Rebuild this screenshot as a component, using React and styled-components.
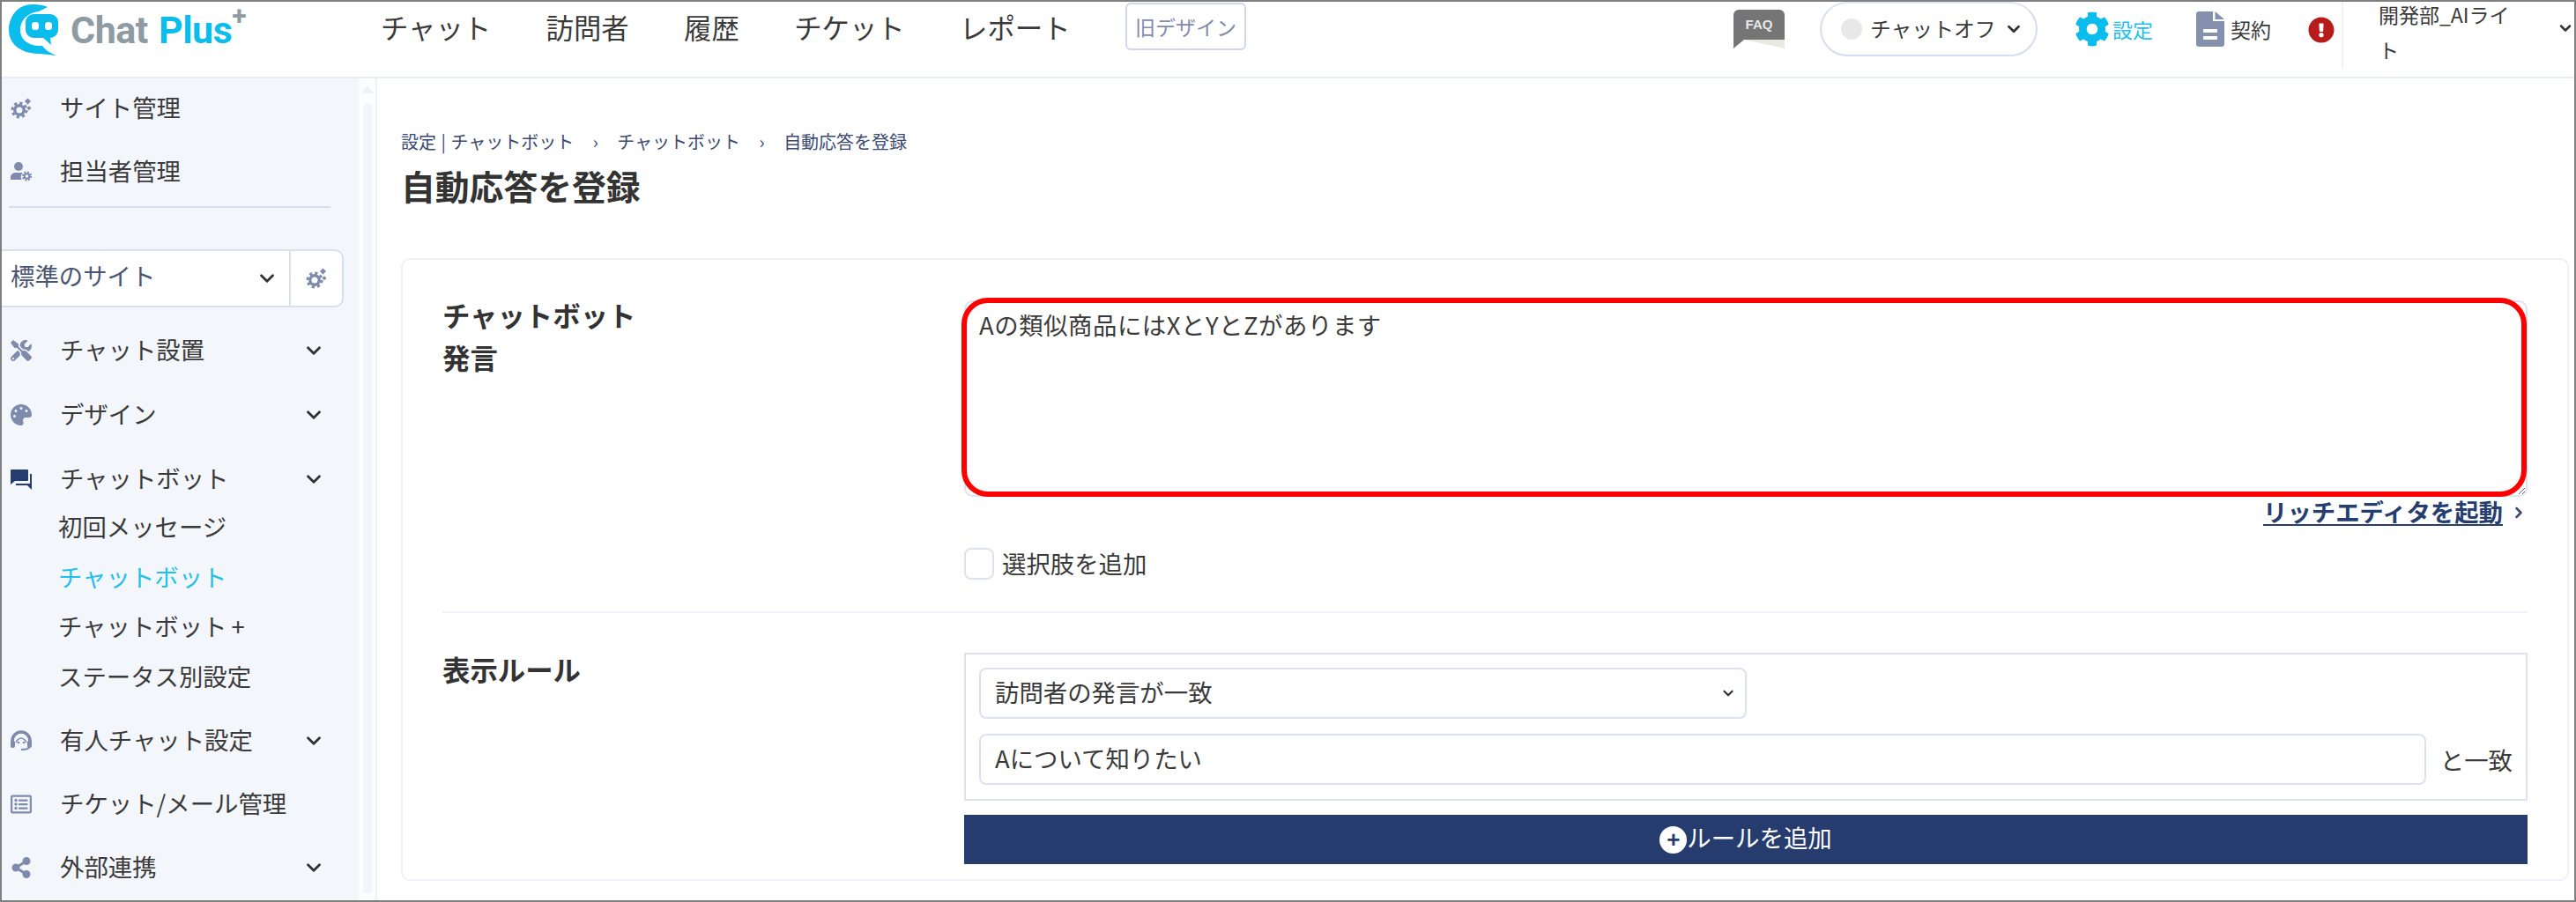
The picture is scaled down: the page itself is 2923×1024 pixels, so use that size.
import styled, { createGlobalStyle } from "styled-components";
import { ChevronDown, ChevronRight } from "lucide-react";
import { FaCog, FaTools, FaPalette, FaRegListAlt, FaShareAlt, FaExclamationCircle } from "react-icons/fa";

const Global = createGlobalStyle`
  html, body { margin: 0; padding: 0; background: #fff; }
  body {
    font-family: "Noto Sans CJK JP", "Noto Sans", sans-serif;
    color: #3a3a3a;
  }
  * { box-sizing: border-box; }
`;

const Frame = styled.div`
  width: 2923px;
  height: 1024px;
  border: 2px solid #808080;
  overflow: hidden;
  display: flex;
  flex-direction: column;
  background: #fff;
`;

/* ---- header ---- */
const Header = styled.header`
  height: 87px;
  flex: none;
  display: flex;
  align-items: flex-start;
  border-bottom: 2px solid #e9eef6;
`;

const Logo = styled.div`
  width: 430px;
  flex: none;
  display: flex;
  align-items: center;
  gap: 12px;
  padding: 1px 0 0 6px;
  height: 62px;
`;

const LogoText = styled.div`
  font-family: Roboto, sans-serif;
  font-weight: 700;
  font-size: 43px;
  line-height: 58px;
  letter-spacing: -0.5px;
  color: #8f9ba3;
  white-space: nowrap;
  b { font-weight: 700; color: #0bbdec; margin-left: 2px; }
  sup {
    font-size: 30px;
    line-height: 0;
    position: relative;
    top: -5px;
    vertical-align: super;
  }
`;

const TopNav = styled.nav`
  display: flex;
  align-items: center;
  gap: 62.3px;
  height: 56px;
  font-size: 31.4px;
  color: #3a3a3a;
`;

const OldDesign = styled.span`
  font-size: 23px;
  line-height: 50px;
  padding: 0 9px;
  border: 2px solid #cfd8ea;
  border-radius: 6px;
  color: #7f8bad;
`;

const HeaderRight = styled.div`
  margin-left: auto;
  display: flex;
  align-items: flex-start;
  font-size: 23px;
  height: 80px;
`;

const FaqMark = styled.svg`
  width: 58px;
  height: 46px;
  margin-top: 7px;
  text {
    font-family: "Liberation Sans", sans-serif;
    font-weight: 700;
    font-size: 15px;
    fill: #e8e8e8;
  }
`;

const ChatPill = styled.div`
  width: 247px;
  height: 62px;
  margin-left: 40px;
  border: 2px solid #d5def0;
  border-top-color: #dfe6f3;
  border-radius: 31px;
  display: flex;
  align-items: center;
  padding: 0 0 3px 22px;
  gap: 9px;
  font-size: 23.8px;
  white-space: nowrap;
  svg { margin-top: 3px; }
`;

const Dot = styled.span`
  width: 24px;
  height: 24px;
  border-radius: 50%;
  background: #e8e8e8;
  margin-top: 3px;
`;

const Tool = styled.div`
  display: flex;
  align-items: center;
  height: 62px;
  margin-left: ${(p) => p.$ml}px;
  gap: ${(p) => p.$gap}px;
  color: ${(p) => p.$color || "#3a3a3a"};
  white-space: nowrap;
`;

const AlertWrap = styled.div`
  margin: 17px 8px 0 42px;
  color: #b71c1c;
  height: 30px;
  svg { display: block; }
`;

const Account = styled.div`
  position: relative;
  width: 264px;
  height: 76px;
  border-left: 2px solid #eef1f8;
  padding: 0 0 0 40px;
  line-height: 40px;
  span { display: block; width: 160px; margin-top: -6px; word-break: break-all; }
  svg { position: absolute; right: 0; top: 20px; }
`;

/* ---- sidebar ---- */
const Body = styled.div`
  flex: 1;
  display: flex;
  min-height: 0;
`;

const Sidebar = styled.aside`
  width: 405px;
  flex: none;
  background: #f3f6fb;
  font-size: 27.4px;
  color: #3a3a3a;
`;

const SideItem = styled.div`
  height: ${(p) => p.$h || 72}px;
  display: flex;
  align-items: center;
  gap: 32px;
  padding: 0 38px 4px 10px;
  white-space: nowrap;
  & > svg { margin-top: 4px; }
  & > svg:first-child {
    width: 24px;
    height: 24px;
    flex: none;
    color: ${(p) => (p.$active ? "#273c6e" : "#7f8bad")};
  }
  & > svg:last-child:not(:first-child) { margin-left: auto; }
`;

const SideTop = styled.div`
  display: flex;
  flex-direction: column;
  gap: 4px;
`;

const SideRule = styled.hr`
  margin: 5px 32px 0 8px;
  border: 0;
  border-top: 2px solid #d6dfef;
`;

const SiteSelect = styled.div`
  margin: 47px 17px 12px 0;
  height: 66px;
  background: #fff;
  border: 2px solid #d8e0f0;
  border-left: 0;
  border-radius: 0 10px 10px 0;
  display: flex;
  color: #4a5572;
`;

const SiteName = styled.div`
  flex: 1;
  display: flex;
  align-items: center;
  justify-content: space-between;
  padding: 0 12px 8px 10px;
  border-right: 2px solid #d8e0f0;
  svg { color: #333; margin-top: 8px; }
`;

const SiteGear = styled.div`
  width: 58px;
  display: flex;
  align-items: center;
  justify-content: center;
  color: #7f8bad;
`;

const SubList = styled.div`
  margin: -9px 0 7px;
`;

const SubItem = styled.div`
  height: 56.7px;
  line-height: 53.5px;
  padding-left: 64px;
  color: ${(p) => (p.$current ? "#1fc0ec" : "#3a3a3a")};
`;

const PlusGap = styled.span`
  margin-left: 5px;
`;

const Rail = styled.div`
  width: 21px;
  flex: none;
  border-right: 2px solid #eef1f8;
  background: #fcfdfe;
  display: flex;
  flex-direction: column;
  align-items: center;
  padding: 8px 0 7px 0;
`;

const RailArrow = styled.div`
  width: 0;
  height: 0;
  border-left: 7px solid transparent;
  border-right: 7px solid transparent;
  border-bottom: 9px solid #eef1f7;
  margin-bottom: 11px;
`;

const RailThumb = styled.div`
  flex: 1;
  width: 10px;
  background: #f2f5fa;
  border-radius: 5px;
`;

/* ---- main ---- */
const Main = styled.main`
  flex: 1;
  padding: 56px 6px 0 27px;
  min-width: 0;
`;

const Crumbs = styled.div`
  display: flex;
  align-items: center;
  gap: 21.5px;
  height: 30px;
  font-size: 20px;
  color: #3c4a72;
`;

const CrumbBar = styled.span`
  margin: 0 5.5px;
`;

const Title = styled.h1`
  margin: 10px 0 0;
  font-size: 38.8px;
  line-height: 50px;
  font-weight: 700;
  color: #333;
`;

const Card = styled.section`
  margin-top: 58px;
  height: 707px;
  border: 2px solid #eef1f8;
  border-radius: 10px;
  padding: 46px 45px 0;
`;

const Row = styled.div`
  display: grid;
  grid-template-columns: 592px 1fr;
`;

const Label = styled.div`
  font-size: 31.4px;
  font-weight: 700;
  line-height: 48px;
  margin-top: ${(p) => p.$top}px;
  color: #333;
`;

const EditorWrap = styled.div`
  position: relative;
  height: 223px;
`;

const Editor = styled.textarea`
  display: block;
  width: 100%;
  height: 100%;
  border: 2px solid #dbe3f2;
  border-radius: 10px;
  padding: 5px 15px;
  font: inherit;
  font-size: 27.4px;
  letter-spacing: 0.55px;
  line-height: 40px;
  color: #3a3a3a;
  outline: none;
`;

const Callout = styled.div`
  position: absolute;
  top: -3px;
  left: -3px;
  right: 1px;
  bottom: 0;
  border: 6px solid #ff0000;
  border-radius: 30px;
  pointer-events: none;
`;

const RichLink = styled.div`
  height: 36px;
  display: flex;
  align-items: center;
  justify-content: flex-end;
  gap: 8px;
  padding-bottom: 4px;
  font-size: 27.4px;
  font-weight: 700;
  color: #263d6f;
  u { text-underline-offset: 3px; }
  svg { color: #3c4a72; margin-top: 4px; }
`;

const CheckRow = styled.label`
  display: flex;
  align-items: center;
  gap: 9px;
  margin-top: 22px;
  height: 36px;
  padding-bottom: 2px;
  font-size: 27.4px;
  span { margin-top: 2px; }
`;

const CheckBox = styled.span`
  width: 34px;
  height: 36px;
  flex: none;
  border: 2px solid #dbe3f2;
  border-radius: 8px;
  background: #fff;
`;

const Divider = styled.hr`
  margin: 36px 0 45px;
  border: 0;
  border-top: 2px solid #eef1f8;
`;

const RuleBox = styled.div`
  height: 168px;
  border: 2px solid #dbe3f2;
  padding: 15px;
  display: flex;
  flex-direction: column;
  gap: 17px;
  font-size: 27.4px;
`;

const Field = styled.div`
  height: 58px;
  width: ${(p) => p.$w || "auto"};
  flex: ${(p) => (p.$grow ? 1 : "none")};
  border: 2px solid #dbe3f2;
  border-radius: 8px;
  display: flex;
  align-items: center;
  justify-content: space-between;
  padding: 0 10px 4px 16px;
  background: #fff;
  svg { margin-top: 4px; }
`;

const FieldLine = styled.div`
  display: flex;
  align-items: center;
  gap: 16px;
  white-space: nowrap;
`;

const AddRule = styled.button`
  display: flex;
  align-items: center;
  justify-content: center;
  width: 100%;
  height: 56px;
  margin-top: 16px;
  padding: 0 0 6px;
  background: #273c6e;
  border: 0;
  color: #fff;
  font: inherit;
  font-size: 27.4px;
`;

const PlusDisc = styled.span`
  width: 31px;
  height: 31px;
  margin-top: 6px;
  border-radius: 50%;
  background: #fff;
  color: #273c6e;
  font-family: "Liberation Sans", sans-serif;
  font-weight: 700;
  font-size: 26px;
  line-height: 30px;
  text-align: center;
`;

const CogSpark = ({ size = 24 }) => (
  <svg width={size} height={size} viewBox="0 0 24 24" fill="currentColor">
    <circle cx="10" cy="14" r="5.2" fill="none" stroke="currentColor" strokeWidth="3.4" />
    <circle cx="10" cy="14" r="8" fill="none" stroke="currentColor" strokeWidth="3" strokeDasharray="3.2 3.08" />
    <rect x="17" y="1.6" width="5" height="5" transform="rotate(45 19.5 4.1)" />
    <rect x="19.2" y="10" width="3.6" height="3.6" transform="rotate(45 21 11.8)" />
  </svg>
);

const PersonCog = () => (
  <svg viewBox="0 0 24 24" fill="currentColor">
    <circle cx="9" cy="6" r="5" />
    <path d="M0 21v-3c0-3 3-5 6-5h6c1 0 1.500.3 1.500 1-2 1-2.500 5-.5 7z" />
    <circle cx="18.500" cy="17" r="2.800" fill="none" stroke="currentColor" strokeWidth="2" />
    <circle cx="18.500" cy="17" r="4.600" fill="none" stroke="currentColor" strokeWidth="2" strokeDasharray="2 1.600" />
  </svg>
);

const BubblesIcon = () => (
  <svg viewBox="0 0 24 24" fill="currentColor">
    <path d="M1 1h18a1 1 0 0 1 1 1v11a1 1 0 0 1-1 1H5l-5 4V2a1 1 0 0 1 1-1z" />
    <path d="M22 6h2v18l-5-5H6v-2h16z" />
  </svg>
);

const AgentIcon = () => (
  <svg viewBox="0 0 24 24" fill="currentColor">
    <path d="M2 17v-5a10 10 0 0 1 20 0v5" fill="none" stroke="currentColor" strokeWidth="3.600" />
    <rect x="0" y="12" width="5" height="8" rx="2" />
    <rect x="19" y="12" width="5" height="8" rx="2" />
    <path d="M6 14c1-3 4-5 6-5s5 2 6 5" fill="none" stroke="currentColor" strokeWidth="1.400" />
    <circle cx="9" cy="14" r="1.300" />
    <circle cx="15" cy="14" r="1.300" />
    <path d="M21 19c0 2-3 3-9 3" fill="none" stroke="currentColor" strokeWidth="2.200" />
  </svg>
);

const LogoMark = () => (
  <svg width="60" height="62" viewBox="8 2 60 62">
    <path
      fill="#0bbdec"
      d="M54 7C47 4 41 4 36 4 20 4 10 18 10 33c0 17 15 27 35 27l19 2c-8-3-13-7-16-11-14 1-25-6-25-18 0-12 10-20 21-21z"
    />
    <path
      fill="#0bbdec"
      d="M38 15h19a9 9 0 0 1 9 9v9a9 9 0 0 1-9 9l1 8-9-8H38a9 9 0 0 1-9-9v-9a9 9 0 0 1 9-9z"
    />
    <rect x="36" y="24" width="8" height="9" rx="3.500" fill="#fff" />
    <rect x="51" y="24" width="8" height="9" rx="3.500" fill="#fff" />
  </svg>
);

const FaqIcon = () => (
  <FaqMark viewBox="0 0 58 46">
    <path fill="#e9e9e1" d="M12 36h46v10z" />
    <path fill="#757575" d="M6 2h46a6 6 0 0 1 6 6v28H12L0 46V8a6 6 0 0 1 6-6z" />
    <text x="29" y="24" textAnchor="middle">FAQ</text>
  </FaqMark>
);

const DocIcon = () => (
  <svg width="32" height="40" viewBox="0 0 32 40">
    <path fill="#8590ae" d="M3 0h16v11h13v26a3 3 0 0 1-3 3H3a3 3 0 0 1-3-3V3a3 3 0 0 1 3-3z" />
    <path fill="#8590ae" d="M21.500 0 32 9H21.500z" />
    <rect x="8" y="20" width="16" height="4" rx="1" fill="#fff" />
    <rect x="8" y="28" width="16" height="4" rx="1" fill="#fff" />
  </svg>
);

const Chev = ({ size = 26, width = 2.6 }) => <ChevronDown size={size} strokeWidth={width} color="#333" />;

const topNav = ["チャット", "訪問者", "履歴", "チケット", "レポート"];

export default function App() {
  return (
    <Frame>
      <Global />
      <Header>
        <Logo>
          <LogoMark />
          <LogoText>
            Chat <b>Plus</b>
            <sup>+</sup>
          </LogoText>
        </Logo>
        <TopNav>
          {topNav.map((t) => (
            <span key={t}>{t}</span>
          ))}
          <OldDesign>旧デザイン</OldDesign>
        </TopNav>
        <HeaderRight>
          <FaqIcon />
          <ChatPill>
            <Dot />
            チャットオフ
            <Chev size={22} width={3} />
          </ChatPill>
          <Tool $ml={42} $gap={3} $color="#1fc0ec">
            <FaCog size={40} color="#0bbdec" />
            設定
          </Tool>
          <Tool $ml={49} $gap={7}>
            <DocIcon />
            契約
          </Tool>
          <AlertWrap>
            <FaExclamationCircle size={30} />
          </AlertWrap>
          <Account>
            <span>開発部_AIライト</span>
            <Chev size={20} width={3} />
          </Account>
        </HeaderRight>
      </Header>
      <Body>
        <Sidebar>
          <SideTop>
            <SideItem $h={68}>
              <CogSpark />
              サイト管理
            </SideItem>
            <SideItem $h={68}>
              <PersonCog />
              担当者管理
            </SideItem>
          </SideTop>
          <SideRule />
          <SiteSelect>
            <SiteName>
              標準のサイト
              <Chev />
            </SiteName>
            <SiteGear>
              <CogSpark />
            </SiteGear>
          </SiteSelect>
          <SideItem $h={73}>
            <FaTools />
            チャット設置
            <Chev />
          </SideItem>
          <SideItem $h={73}>
            <FaPalette />
            デザイン
            <Chev />
          </SideItem>
          <SideItem $h={73} $active>
            <BubblesIcon />
            チャットボット
            <Chev />
          </SideItem>
          <SubList>
            <SubItem>初回メッセージ</SubItem>
            <SubItem $current>チャットボット</SubItem>
            <SubItem>
              チャットボット<PlusGap>+</PlusGap>
            </SubItem>
            <SubItem>ステータス別設定</SubItem>
          </SubList>
          <SideItem>
            <AgentIcon />
            有人チャット設定
            <Chev />
          </SideItem>
          <SideItem>
            <FaRegListAlt />
            チケット/メール管理
          </SideItem>
          <SideItem>
            <FaShareAlt />
            外部連携
            <Chev />
          </SideItem>
        </Sidebar>
        <Rail>
          <RailArrow />
          <RailThumb />
        </Rail>
        <Main>
          <Crumbs>
            <span>
              設定<CrumbBar>|</CrumbBar>チャットボット
            </span>
            <span>›</span>
            <span>チャットボット</span>
            <span>›</span>
            <span>自動応答を登録</span>
          </Crumbs>
          <Title>自動応答を登録</Title>
          <Card>
            <Row>
              <Label $top={-7}>
                チャットボット
                <br />
                発言
              </Label>
              <div>
                <EditorWrap>
                  <Editor readOnly defaultValue="Aの類似商品にはXとYとZがあります" />
                  <Callout />
                </EditorWrap>
                <RichLink>
                  <u>リッチエディタを起動</u>
                  <ChevronRight size={20} strokeWidth={3} />
                </RichLink>
                <CheckRow>
                  <CheckBox />
                  選択肢を追加
                </CheckRow>
              </div>
            </Row>
            <Divider />
            <Row>
              <Label $top={-5}>表示ルール</Label>
              <div>
                <RuleBox>
                  <Field $w="871px">
                    訪問者の発言が一致
                    <Chev size={18} width={3} />
                  </Field>
                  <FieldLine>
                    <Field $grow>Aについて知りたい</Field>
                    と一致
                  </FieldLine>
                </RuleBox>
                <AddRule>
                  <PlusDisc>+</PlusDisc>
                  ルールを追加
                </AddRule>
              </div>
            </Row>
          </Card>
        </Main>
      </Body>
    </Frame>
  );
}
